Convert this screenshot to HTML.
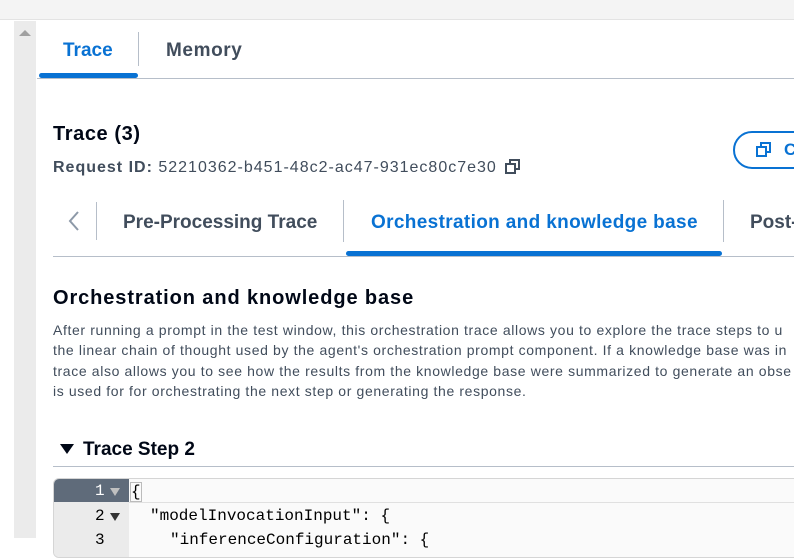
<!DOCTYPE html>
<html><head><style>
*{margin:0;padding:0;box-sizing:border-box}
body{width:794px;height:538px;overflow:hidden;background:#fff;font-family:"Liberation Sans",sans-serif;position:relative;color:#000716}
.a{position:absolute;white-space:nowrap}
</style></head><body>
<div class="a" style="left:0;top:0;width:794px;height:20px;background:#f4f4f4;border-bottom:1px solid #e3e3e3"></div>
<div class="a" style="left:14px;top:21px;width:22px;height:517px;background:#ebebeb"></div>
<div class="a" style="left:19px;top:30px;width:0;height:0;border-left:6px solid transparent;border-right:6px solid transparent;border-bottom:6px solid #a0a0a0"></div>
<div class="a" style="left:63px;top:40px;font-size:19px;font-weight:bold;color:#0972d3">Trace</div>
<div class="a" style="left:138px;top:32px;width:1px;height:34px;background:#b6bec9"></div>
<div class="a" style="left:166px;top:40px;font-size:19px;font-weight:bold;color:#414d5c;letter-spacing:0.6px">Memory</div>
<div class="a" style="left:39px;top:73px;width:99px;height:5px;border-radius:3px;background:#0972d3"></div>
<div class="a" style="left:37px;top:78px;width:757px;height:1px;background:#b6bec9"></div>
<div class="a" style="left:53px;top:123px;font-size:20px;font-weight:bold;letter-spacing:0.6px">Trace (3)</div>
<div class="a" style="left:53px;top:159px;font-size:16px;color:#414d5c;letter-spacing:1px"><b>Request ID:</b> 52210362-b451-48c2-ac47-931ec80c7e30</div>
<svg class="a" style="left:504px;top:158px" width="18" height="18" viewBox="0 0 18 18" fill="none" stroke="#414d5c" stroke-width="2"><rect x="2" y="6" width="9" height="9"/><path d="M6 6V2h9v9h-4"/></svg>
<div class="a" style="left:733px;top:131px;width:80px;height:38px;border:2px solid #0972d3;border-radius:20px"></div>
<svg class="a" style="left:755px;top:141px" width="18" height="18" viewBox="0 0 18 18" fill="none" stroke="#0972d3" stroke-width="2"><rect x="2" y="6" width="9" height="9"/><path d="M6 6V2h9v9h-4"/></svg>
<div class="a" style="left:784px;top:140px;font-size:17px;font-weight:bold;color:#0972d3">C</div>
<svg class="a" style="left:66px;top:210px" width="16" height="22" viewBox="0 0 16 22" fill="none" stroke="#8d99a8" stroke-width="2"><path d="M12 2L4 11l8 9"/></svg>
<div class="a" style="left:96px;top:202px;width:1px;height:38px;background:#b6bec9"></div>
<div class="a" style="left:123px;top:212px;font-size:19px;font-weight:bold;color:#414d5c">Pre-Processing Trace</div>
<div class="a" style="left:343px;top:200px;width:1px;height:42px;background:#b6bec9"></div>
<div class="a" style="left:371px;top:212px;font-size:19px;font-weight:bold;color:#0972d3;letter-spacing:0.35px">Orchestration and knowledge base</div>
<div class="a" style="left:723px;top:200px;width:1px;height:42px;background:#b6bec9"></div>
<div class="a" style="left:750px;top:212px;font-size:19px;font-weight:bold;color:#414d5c">Post-</div>
<div class="a" style="left:346px;top:251px;width:376px;height:5px;border-radius:3px;background:#0972d3"></div>
<div class="a" style="left:53px;top:256px;width:741px;height:1px;background:#b6bec9"></div>
<div class="a" style="left:53px;top:287px;font-size:20px;font-weight:bold;letter-spacing:0.9px">Orchestration and knowledge base</div>
<div class="a" style="left:53px;top:320px;font-size:14px;line-height:20.3px;color:#414d5c;letter-spacing:0.63px">After running a prompt in the test window, this orchestration trace allows you to explore the trace steps to u<br>the linear chain of thought used by the agent's orchestration prompt component. If a knowledge base was in<br>trace also allows you to see how the results from the knowledge base were summarized to generate an obse<br>is used for for orchestrating the next step or generating the response.</div>
<div class="a" style="left:60px;top:444px;width:0;height:0;border-left:7px solid transparent;border-right:7px solid transparent;border-top:10px solid #000716"></div>
<div class="a" style="left:83px;top:439px;font-size:19px;font-weight:bold">Trace Step 2</div>
<div class="a" style="left:53px;top:466px;width:741px;height:1px;background:#b6bec9"></div>
<div class="a" style="left:53px;top:478px;width:760px;height:80px;border:1px solid #d5d5d5;border-radius:6px;background:#fafafa;overflow:hidden">
 <div class="a" style="left:0;top:0;width:75px;height:80px;background:#ebebeb"></div>
 <div class="a" style="left:0;top:0;width:75px;height:23px;background:#5f6b7a"></div>
 <div class="a" style="left:75px;top:23px;width:700px;height:1px;background:#e0e0e0"></div>
</div>
<div class="a" style="left:95px;top:482px;font:16px 'Liberation Mono',monospace;color:#fff">1</div>
<div class="a" style="left:110px;top:488px;width:0;height:0;border-left:5px solid transparent;border-right:5px solid transparent;border-top:8px solid #c0c0c0"></div>
<div class="a" style="left:95px;top:507px;font:16px 'Liberation Mono',monospace;color:#000">2</div>
<div class="a" style="left:110px;top:513px;width:0;height:0;border-left:5px solid transparent;border-right:5px solid transparent;border-top:8px solid #333"></div>
<div class="a" style="left:95px;top:531px;font:16px 'Liberation Mono',monospace;color:#000">3</div>
<div class="a" style="left:130px;top:482px;font:16px 'Liberation Mono',monospace;color:#000;border:1px solid #bbb;height:20px;line-height:18px">{</div>
<div class="a" style="left:150px;top:507px;font:16px 'Liberation Mono',monospace;color:#000">"modelInvocationInput": {</div>
<div class="a" style="left:170px;top:531px;font:16px 'Liberation Mono',monospace;color:#000">"inferenceConfiguration": {</div>
</body></html>
